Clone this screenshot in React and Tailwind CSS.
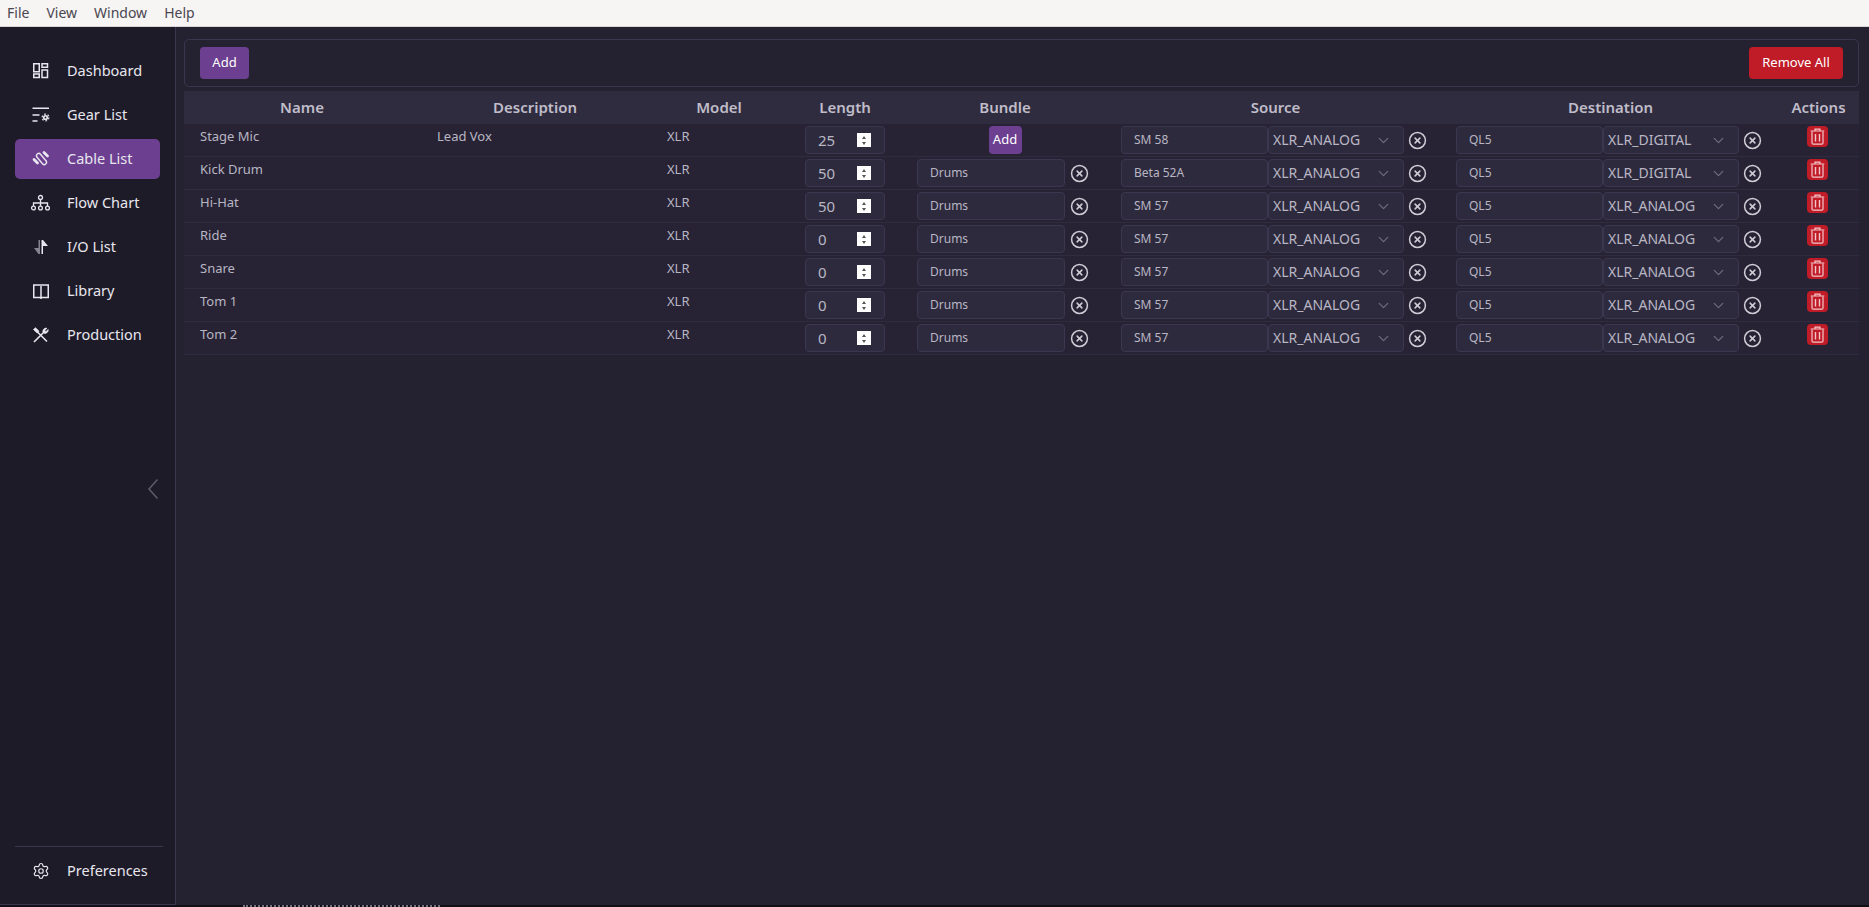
import React from "react";
import { ChevronDown, CircleX, Settings } from "lucide-react";

const font = "font-['Noto_Sans','Open_Sans',sans-serif]";

const rows = [
    { name: "Stage Mic", desc: "Lead Vox", len: "25", bundle: null, src: "SM 58", srcT: "XLR_ANALOG", dst: "QL5", dstT: "XLR_DIGITAL" },
    { name: "Kick Drum", desc: "", len: "50", bundle: "Drums", src: "Beta 52A", srcT: "XLR_ANALOG", dst: "QL5", dstT: "XLR_DIGITAL" },
    { name: "Hi-Hat", desc: "", len: "50", bundle: "Drums", src: "SM 57", srcT: "XLR_ANALOG", dst: "QL5", dstT: "XLR_ANALOG" },
    { name: "Ride", desc: "", len: "0", bundle: "Drums", src: "SM 57", srcT: "XLR_ANALOG", dst: "QL5", dstT: "XLR_ANALOG" },
    { name: "Snare", desc: "", len: "0", bundle: "Drums", src: "SM 57", srcT: "XLR_ANALOG", dst: "QL5", dstT: "XLR_ANALOG" },
    { name: "Tom 1", desc: "", len: "0", bundle: "Drums", src: "SM 57", srcT: "XLR_ANALOG", dst: "QL5", dstT: "XLR_ANALOG" },
    { name: "Tom 2", desc: "", len: "0", bundle: "Drums", src: "SM 57", srcT: "XLR_ANALOG", dst: "QL5", dstT: "XLR_ANALOG" },
];

const Svg = ({ children }) => (
    <svg width="18" height="18" viewBox="0 0 18 18" fill="none" stroke="currentColor" strokeWidth="1.5" className="shrink-0 overflow-visible">
        {children}
    </svg>
);

const DashboardIcon = () => (
    <Svg>
        <rect x="1.75" y="1.75" width="5.5" height="8" />
        <rect x="1.75" y="12" width="5.5" height="3.5" />
        <rect x="10" y="1.75" width="5.5" height="3.5" />
        <rect x="10" y="8" width="5.5" height="7.5" />
    </Svg>
);

const GearListIcon = () => (
    <Svg>
        <path d="M0.5 2.25H17M0.5 9H7.5M0.5 15H5.5" />
        <circle cx="13.5" cy="11.5" r="2.6" fill="currentColor" stroke="none" />
        <circle cx="13.5" cy="11.5" r="3.4" strokeWidth="1.2" strokeDasharray="1.8 1.76" />
        <circle cx="13.5" cy="11.5" r="0.9" fill="#1e1b29" stroke="none" />
    </Svg>
);

const CableIcon = () => (
    <Svg>
        <path d="M2 9.5L5.5 13M12 2.5L15.5 6" strokeWidth="2.8" strokeLinecap="round" />
        <rect x="7.25" y="2.5" width="4.5" height="13" rx="2.25" strokeWidth="1.4" transform="rotate(-40 9.5 9)" />
    </Svg>
);

const FlowChartIcon = () => (
    <Svg>
        <circle cx="8.5" cy="3.5" r="2" strokeWidth="1.3" />
        <path d="M8.5 5.5V12M1.5 12V9H15.5V12" strokeWidth="1.3" />
        <circle cx="1.5" cy="14" r="1.9" strokeWidth="1.3" />
        <circle cx="8.5" cy="14" r="1.9" strokeWidth="1.3" />
        <circle cx="15.5" cy="14" r="1.9" strokeWidth="1.3" />
    </Svg>
);

const IoIcon = () => (
    <svg width="18" height="18" viewBox="0 0 18 18" className="shrink-0">
        <path d="M6.5 2H8V16H6.5V16L2 10H6.5Z" fill="#85838f" />
        <path d="M9.5 2H11L16 8H11V16H9.5Z" fill="currentColor" />
    </svg>
);

const LibraryIcon = () => (
    <Svg>
        <path d="M9 4V17M1.75 3H16.25V15.5H1.75Z" />
    </Svg>
);

const ProductionIcon = () => (
    <Svg>
        <path d="M2 16L11 7M5.5 6L15 15.5" strokeWidth="1.6" />
        <path d="M1.5 3.5L3.5 1.8L7 5.2L5.2 7Z" fill="currentColor" strokeWidth="0.8" />
        <path d="M11 7C10 4.5 12 1.5 15 2.2L12.8 4.3L14 5.5L16.2 3.4C16.8 6 14 8.4 11 7Z" fill="currentColor" strokeWidth="0.6" />
    </Svg>
);

const PreferencesIcon = () => <Settings width={18} height={18} strokeWidth={1.6} className="shrink-0" />;

const TrashIcon = () => (
    <svg width="15" height="17" viewBox="0 0 15 17" fill="none" stroke="#f3c6ca" strokeWidth="1.2" className="shrink-0">
        <path d="M0.7 3H14.3M5 3V1.2H10V3" />
        <path d="M2 3.5V15C2 15.8 2.5 16.2 3.2 16.2H11.8C12.5 16.2 13 15.8 13 15V3.5" />
        <path d="M5.5 6V13.5M9.5 6V13.5" strokeWidth="1.4" />
    </svg>
);

const nav = [
    { label: "Dashboard", icon: DashboardIcon },
    { label: "Gear List", icon: GearListIcon },
    { label: "Cable List", icon: CableIcon, active: true },
    { label: "Flow Chart", icon: FlowChartIcon },
    { label: "I/O List", icon: IoIcon },
    { label: "Library", icon: LibraryIcon },
    { label: "Production", icon: ProductionIcon },
];

// name, description, model, length, bundle, source, destination, actions
const cols = "grid grid-cols-[236px_230px_138px_114px_206px_335px_335px_1fr]";

const TextBox = ({ value, className = "" }) => (
    <div className={`h-7 bg-[#2d2a3e] border border-[#3b3750] rounded-[4px] pl-3 flex items-center text-xs text-[#b9b6c3] ${className}`}>
        {value}
    </div>
);

const TypeSelect = ({ value }) => (
    <div className="h-7 w-[136px] bg-[#2d2a3e] border border-[#3b3750] rounded-[4px] pl-1 pr-[11px] flex items-center justify-between text-sm text-[#b9b6c3]">
        <span>{value}</span>
        <ChevronDown size={17} strokeWidth={1.75} className="text-[#6f6c80]" />
    </div>
);

const Clear = () => <CircleX size={19} strokeWidth={1.9} className="text-[#cfcdd6] shrink-0" />;

const Connection = ({ name, type }) => (
    <div className="flex items-center pl-[13px]">
        <TextBox value={name} className="w-[147px]" />
        <TypeSelect value={type} />
        <div className="ml-1"><Clear /></div>
    </div>
);

const Row = ({ row }) => (
    <div className={`${cols} h-[33px] bg-[#272334] border-b border-[#2f2c3f] text-[13px] text-[#b9b6c3]`}>
        <div className="pl-4 pt-[3px]">{row.name}</div>
        <div className="pl-[17px] pt-[3px]">{row.desc}</div>
        <div className="pl-[17px] pt-[3px]">XLR</div>
        <div className="flex justify-center items-start pt-[2px]">
            <div className="h-7 w-20 bg-[#2d2a3e] border border-[#3b3750] rounded-[4px] pl-3 pr-[13px] flex items-center justify-between text-[15px]">
                <span>{row.len}</span>
                <div className="w-[14px] h-[14px] bg-white flex flex-col items-center justify-center gap-[3px]">
                    <span className="w-0 h-0 border-x-[2px] border-x-transparent border-b-[3px] border-b-[#555]" />
                    <span className="w-0 h-0 border-x-[2px] border-x-transparent border-t-[3px] border-t-[#555]" />
                </div>
            </div>
        </div>
        {row.bundle ? (
            <div className="flex items-start pt-[2px] pl-[15px]">
                <div className="flex items-center gap-[5px]">
                    <TextBox value={row.bundle} className="w-[148px]" />
                    <Clear />
                </div>
            </div>
        ) : (
            <div className="flex justify-center items-start pt-[2px]">
                <button className="h-7 w-[33px] bg-[#6d3f91] rounded-[4px] text-[13px] text-white">Add</button>
            </div>
        )}
        <div className="pt-[2px]"><Connection name={row.src} type={row.srcT} /></div>
        <div className="pt-[2px]"><Connection name={row.dst} type={row.dstT} /></div>
        <div className="flex justify-center pt-[2px] pr-[2px]">
            <div className="w-[21px] h-[21px] bg-[#c01c28] rounded-[4px] flex items-center justify-center">
                <TrashIcon />
            </div>
        </div>
    </div>
);

export default function App() {
    return (
        <div className={`${font} h-[907px] w-full flex flex-col overflow-hidden bg-[#242130]`}>
            {/* menu bar */}
            <div className="h-[27px] shrink-0 bg-[#f6f5f4] border-b border-[#d8d6d3] flex items-center gap-[17px] pl-[7px] text-sm text-[#4a4650]">
                <span>File</span>
                <span>View</span>
                <span>Window</span>
                <span>Help</span>
            </div>
            <div className="flex-1 flex min-h-0">
                {/* sidebar */}
                <aside className="w-[176px] shrink-0 bg-[#1e1b29] border-r border-b border-[#3a3650] flex flex-col pl-[15px] pr-[12px] pt-[24px] pb-[13px] relative">
                    <nav className="flex flex-col gap-[4px] mr-[3px]">
                        {nav.map(({ label, icon: Icon, active }) => (
                            <div
                                key={label}
                                className={`h-10 rounded-[5px] pl-[17px] flex items-center gap-[17px] text-[14.5px] text-[#e8e6ee] ${active ? "bg-[#6d3f91]" : ""}`}
                            >
                                <Icon />
                                <span>{label}</span>
                            </div>
                        ))}
                    </nav>
                    <svg width="10" height="20" viewBox="0 0 10 20" fill="none" stroke="#5f5c6e" strokeWidth="1.5" className="absolute left-[148px] top-[452px]">
                        <path d="M9.5 0.5L1 10L9.5 19.5" />
                    </svg>
                    <div className="mt-auto border-t border-[#3a3650] pt-[4px]">
                        <div className="h-10 pl-[17px] flex items-center gap-[17px] text-[14.5px] text-[#e8e6ee]">
                            <PreferencesIcon />
                            <span>Preferences</span>
                        </div>
                    </div>
                </aside>
                {/* main */}
                <main className="flex-1 min-w-0 pl-2 pr-[10px] pt-[12px]">
                    <div className="h-[48px] border border-[#3a3650] rounded-[5px] flex items-center justify-between pl-[15px] pr-[15px]">
                        <button className="h-8 w-[49px] bg-[#6d3f91] rounded-[4px] text-[13px] text-white">Add</button>
                        <button className="h-8 w-[94px] bg-[#c01c28] rounded-[4px] text-[13px] text-white">Remove All</button>
                    </div>
                    <div className={`${cols} mt-[4px] h-[33px] bg-[#2f2c40] items-center text-center text-[15px] font-semibold text-[#c0bdc9]`}>
                        <div>Name</div>
                        <div>Description</div>
                        <div>Model</div>
                        <div>Length</div>
                        <div>Bundle</div>
                        <div>Source</div>
                        <div>Destination</div>
                        <div>Actions</div>
                    </div>
                    {rows.map((row) => (
                        <Row key={row.name} row={row} />
                    ))}
                </main>
            </div>
            <div className="h-[2px] shrink-0 bg-[#111016] pl-[243px]">
                <div className="w-[197px] border-t-2 border-dotted border-[#77757f]" />
            </div>
        </div>
    );
}
